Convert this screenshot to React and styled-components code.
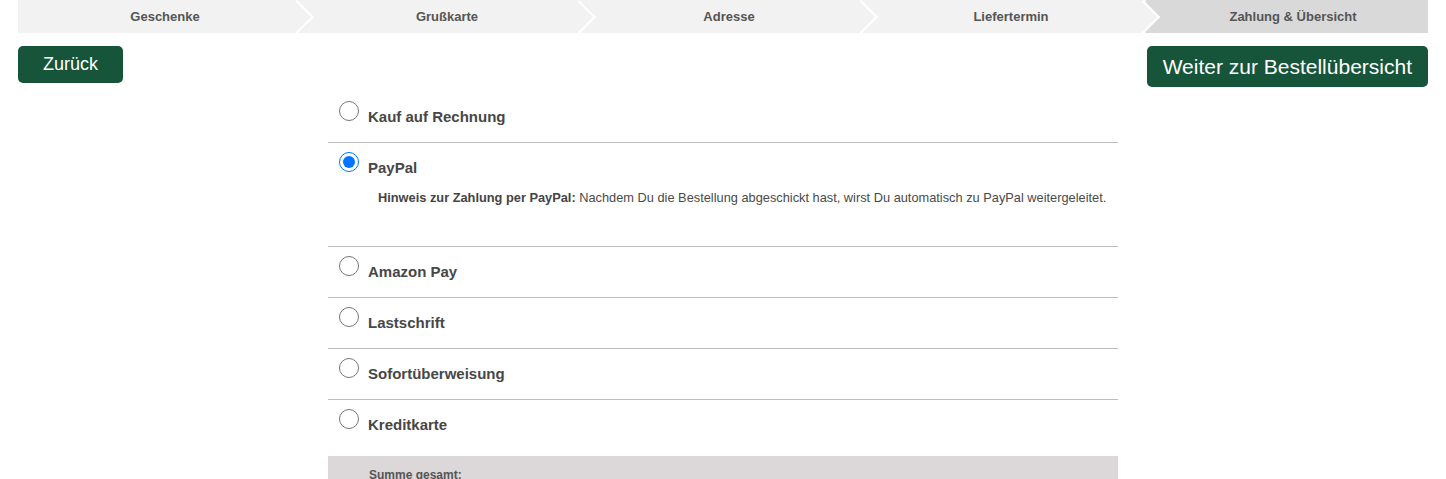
import React, { useState } from 'react';
import styled, { createGlobalStyle } from 'styled-components';

const GlobalStyle = createGlobalStyle`
    body {
        margin: 0;
        background: #fff;
        font-family: "Liberation Sans", Arial, sans-serif;
        color: #444;
    }
`;

const Page = styled.div`
    width: 1410px;
    margin: 0 auto;
`;

const StepBar = styled.div`
    display: flex;
    height: 33px;
    overflow: hidden;
`;

const Step = styled.div`
    position: relative;
    flex: 1;
    display: flex;
    align-items: center;
    justify-content: center;
    padding-left: 12px;
    padding-bottom: 1px;
    background: ${({ active }) => active ? "#d9d9d9" : "#f2f2f2"};
    font-size: 13px;
    font-weight: bold;
    color: #555;
    &::after {
        content: ${({ last }) => last ? "none" : "''"};
        position: absolute;
        top: 4.5px;
        right: -9px;
        width: 24px;
        height: 24px;
        box-sizing: border-box;
        background: ${({ active }) => active ? "#d9d9d9" : "#f2f2f2"};
        border-top: 2px solid #fff;
        border-right: 2px solid #fff;
        transform: rotate(45deg);
        z-index: 1;
    }
`;

const ButtonRow = styled.div`
    display: flex;
    justify-content: space-between;
    align-items: flex-start;
    margin-top: 13px;
`;

const GreenButton = styled.button`
    border: none;
    border-radius: 5px;
    background: #17553a;
    color: #fff;
    font-family: "Liberation Sans", Arial, sans-serif;
    font-size: ${({ big }) => big ? "21px" : "18px"};
    line-height: ${({ big }) => big ? "23px" : "21px"};
    padding: ${({ big }) => big ? "9px 16px" : "8px 25px"};
    cursor: pointer;
`;

const Methods = styled.div`
    width: 790px;
    margin: 5px auto 0;
`;

const Row = styled.div`
    padding: 9px 0 16px;
    border-bottom: 1px solid ${({ last }) => last ? "transparent" : "#bdbdbd"};
`;

const RowHead = styled.label`
    display: flex;
    align-items: flex-start;
    cursor: pointer;
`;

const Radio = styled.input`
    width: 20px;
    height: 20px;
    margin: 0 9px 0 11px;
    flex: none;
`;

const Label = styled.span`
    padding-top: 7px;
    font-size: 15px;
    line-height: 18px;
    font-weight: bold;
    color: #474747;
`;

const Hint = styled.p`
    margin: 13px 0 24px 50px;
    font-size: 12.8px;
    line-height: 16px;
    color: #4a4a4a;
    b {
        color: #444;
    }
`;

const Summary = styled.div`
    margin-top: 5px;
    background: #dcd8d9;
    padding: 12px 41px;
    font-size: 12px;
    font-weight: bold;
    color: #555;
`;

const steps = ["Geschenke", "Grußkarte", "Adresse", "Liefertermin", "Zahlung & Übersicht"];

const methods = ["Kauf auf Rechnung", "PayPal", "Amazon Pay", "Lastschrift", "Sofortüberweisung", "Kreditkarte"];

const App = () => {
    const [method, setMethod] = useState("PayPal");

    return (
        <Page>
            <GlobalStyle/>
            <StepBar>
                {steps.map((s, i) => (
                    <Step key={s} active={i === steps.length - 1} last={i === steps.length - 1}>{s}</Step>
                ))}
            </StepBar>
            <ButtonRow>
                <GreenButton>Zurück</GreenButton>
                <GreenButton big>Weiter zur Bestellübersicht</GreenButton>
            </ButtonRow>
            <Methods>
                {methods.map((m, i) => (
                    <Row key={m} last={i === methods.length - 1}>
                        <RowHead>
                            <Radio type="radio" name="payment" checked={method === m} onChange={() => setMethod(m)}/>
                            <Label>{m}</Label>
                        </RowHead>
                        {m === "PayPal" && method === "PayPal" &&
                            <Hint><b>Hinweis zur Zahlung per PayPal:</b> Nachdem Du die Bestellung abgeschickt hast, wirst Du automatisch zu PayPal weitergeleitet.</Hint>
                        }
                    </Row>
                ))}
                <Summary>Summe gesamt:</Summary>
            </Methods>
        </Page>
    );
}

export default App;
